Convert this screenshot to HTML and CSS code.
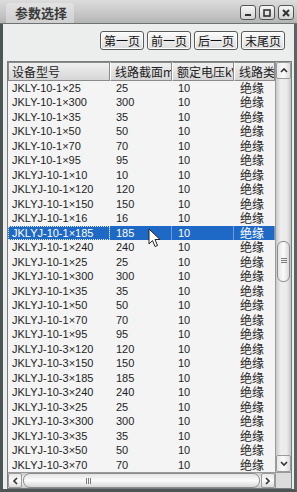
FILE: index.html
```html
<!DOCTYPE html>
<html lang="zh-CN">
<head>
    <meta charset="UTF-8">
    <title>参数选择</title>
    <link rel="stylesheet" href="styles.css">
</head>
<body>
    <div class="window">
        <div class="titlebar">
            <div class="title-tab">参数选择</div>
            <div class="win-btns">
                <span class="win-btn"><svg width="10" height="10" viewBox="0 0 10 10"><rect x="2" y="6" width="6" height="2" fill="#333"/></svg></span>
                <span class="win-btn"><svg width="10" height="10" viewBox="0 0 10 10"><rect x="2" y="2" width="6" height="6" fill="none" stroke="#333" stroke-width="1.6"/></svg></span>
                <span class="win-btn"><svg width="10" height="10" viewBox="0 0 10 10"><path d="M2 2 L8 8 M8 2 L2 8" stroke="#333" stroke-width="2"/></svg></span>
            </div>
        </div>

        <div class="toolbar">
            <button class="page-btn">第一页</button>
            <button class="page-btn">前一页</button>
            <button class="page-btn">后一页</button>
            <button class="page-btn">末尾页</button>
        </div>

        <div class="grid">
            <div class="grid-main">
                <div class="grid-view">
                    <div class="row head">
                        <div class="cell">设备型号</div>
                        <div class="cell">线路截面mm²</div>
                        <div class="cell">额定电压kV</div>
                        <div class="cell">线路类型</div>
                    </div>
                    <div class="row"><div class="cell">JKLY-10-1×25</div><div class="cell">25</div><div class="cell">10</div><div class="cell cn">绝缘</div></div>
                    <div class="row"><div class="cell">JKLY-10-1×300</div><div class="cell">300</div><div class="cell">10</div><div class="cell cn">绝缘</div></div>
                    <div class="row"><div class="cell">JKLY-10-1×35</div><div class="cell">35</div><div class="cell">10</div><div class="cell cn">绝缘</div></div>
                    <div class="row"><div class="cell">JKLY-10-1×50</div><div class="cell">50</div><div class="cell">10</div><div class="cell cn">绝缘</div></div>
                    <div class="row"><div class="cell">JKLY-10-1×70</div><div class="cell">70</div><div class="cell">10</div><div class="cell cn">绝缘</div></div>
                    <div class="row"><div class="cell">JKLY-10-1×95</div><div class="cell">95</div><div class="cell">10</div><div class="cell cn">绝缘</div></div>
                    <div class="row"><div class="cell">JKLYJ-10-1×10</div><div class="cell">10</div><div class="cell">10</div><div class="cell cn">绝缘</div></div>
                    <div class="row"><div class="cell">JKLYJ-10-1×120</div><div class="cell">120</div><div class="cell">10</div><div class="cell cn">绝缘</div></div>
                    <div class="row"><div class="cell">JKLYJ-10-1×150</div><div class="cell">150</div><div class="cell">10</div><div class="cell cn">绝缘</div></div>
                    <div class="row"><div class="cell">JKLYJ-10-1×16</div><div class="cell">16</div><div class="cell">10</div><div class="cell cn">绝缘</div></div>
                    <div class="row selected"><div class="cell">JKLYJ-10-1×185</div><div class="cell">185</div><div class="cell">10</div><div class="cell cn">绝缘</div></div>
                    <div class="row"><div class="cell">JKLYJ-10-1×240</div><div class="cell">240</div><div class="cell">10</div><div class="cell cn">绝缘</div></div>
                    <div class="row"><div class="cell">JKLYJ-10-1×25</div><div class="cell">25</div><div class="cell">10</div><div class="cell cn">绝缘</div></div>
                    <div class="row"><div class="cell">JKLYJ-10-1×300</div><div class="cell">300</div><div class="cell">10</div><div class="cell cn">绝缘</div></div>
                    <div class="row"><div class="cell">JKLYJ-10-1×35</div><div class="cell">35</div><div class="cell">10</div><div class="cell cn">绝缘</div></div>
                    <div class="row"><div class="cell">JKLYJ-10-1×50</div><div class="cell">50</div><div class="cell">10</div><div class="cell cn">绝缘</div></div>
                    <div class="row"><div class="cell">JKLYJ-10-1×70</div><div class="cell">70</div><div class="cell">10</div><div class="cell cn">绝缘</div></div>
                    <div class="row"><div class="cell">JKLYJ-10-1×95</div><div class="cell">95</div><div class="cell">10</div><div class="cell cn">绝缘</div></div>
                    <div class="row"><div class="cell">JKLYJ-10-3×120</div><div class="cell">120</div><div class="cell">10</div><div class="cell cn">绝缘</div></div>
                    <div class="row"><div class="cell">JKLYJ-10-3×150</div><div class="cell">150</div><div class="cell">10</div><div class="cell cn">绝缘</div></div>
                    <div class="row"><div class="cell">JKLYJ-10-3×185</div><div class="cell">185</div><div class="cell">10</div><div class="cell cn">绝缘</div></div>
                    <div class="row"><div class="cell">JKLYJ-10-3×240</div><div class="cell">240</div><div class="cell">10</div><div class="cell cn">绝缘</div></div>
                    <div class="row"><div class="cell">JKLYJ-10-3×25</div><div class="cell">25</div><div class="cell">10</div><div class="cell cn">绝缘</div></div>
                    <div class="row"><div class="cell">JKLYJ-10-3×300</div><div class="cell">300</div><div class="cell">10</div><div class="cell cn">绝缘</div></div>
                    <div class="row"><div class="cell">JKLYJ-10-3×35</div><div class="cell">35</div><div class="cell">10</div><div class="cell cn">绝缘</div></div>
                    <div class="row"><div class="cell">JKLYJ-10-3×50</div><div class="cell">50</div><div class="cell">10</div><div class="cell cn">绝缘</div></div>
                    <div class="row"><div class="cell">JKLYJ-10-3×70</div><div class="cell">70</div><div class="cell">10</div><div class="cell cn">绝缘</div></div>
                </div>

                <div class="vscroll">
                    <div class="sb-arrow"><svg width="8" height="6" viewBox="0 0 8 6"><path d="M1 5 L4 2 L7 5" fill="none" stroke="#333" stroke-width="1.6"/></svg></div>
                    <div class="v-track">
                        <div class="v-thumb"><span class="grip-h"></span></div>
                    </div>
                    <div class="sb-arrow"><svg width="8" height="6" viewBox="0 0 8 6"><path d="M1 1 L4 4 L7 1" fill="none" stroke="#333" stroke-width="1.6"/></svg></div>
                </div>
            </div>

            <div class="hscroll-row">
                <div class="hscroll">
                    <div class="sb-arrow h"><svg width="6" height="8" viewBox="0 0 6 8"><path d="M5 1 L2 4 L5 7" fill="none" stroke="#333" stroke-width="1.6"/></svg></div>
                    <div class="h-thumb"><span class="grip-v"></span></div>
                    <div class="sb-arrow h"><svg width="6" height="8" viewBox="0 0 6 8"><path d="M1 1 L4 4 L1 7" fill="none" stroke="#333" stroke-width="1.6"/></svg></div>
                </div>
                <div class="corner"></div>
            </div>

            <!-- mouse pointer over the selected row -->
            <svg class="cursor" width="13" height="20" viewBox="0 0 13 20">
                <path d="M1 1 L1 16 L4.5 12.5 L7 18.5 L9.5 17.5 L7 11.5 L12 11.5 Z" fill="#fff" stroke="#222" stroke-width="1"/>
            </svg>
        </div>
    </div>
</body>
</html>
```

FILE: styles.css
```css
* {
    box-sizing: border-box;
}

body {
    margin: 0;
    width: 297px;
    height: 492px;
    overflow: hidden;
    font-family: "Liberation Sans", "Noto Sans CJK SC", sans-serif;
    background: #ececec;
}

.window {
    width: 297px;
    height: 492px;
    display: flex;
    flex-direction: column;
    background: #eceeee;
    border-left: 3px solid #4b5555;
    border-right: 3px solid #5d6262;
    border-bottom: 3px solid #4e5454;
}

/* title bar */
.titlebar {
    height: 24px;
    display: flex;
    align-items: flex-start;
    justify-content: space-between;
    margin: 0 -3px;
    padding: 3px 3px 0 6px;
    background: linear-gradient(#dcdcdc, #c2c2c2 70%, #b4b4b4);
    border-bottom: 1px solid #6e7272;
}

.title-tab {
    height: 20px;
    padding: 1px 7px 0 9px;
    font-family: "Noto Sans CJK SC", sans-serif;
    font-size: 13px;
    font-weight: bold;
    line-height: 18px;
    color: #3a3a3a;
    background: linear-gradient(#e2e2e2, #cfcfcf);
    border-radius: 4px 4px 0 0;
}

.win-btns {
    display: flex;
    gap: 3px;
    margin-top: 2px;
}

.win-btn {
    width: 16px;
    height: 15px;
    display: flex;
    align-items: center;
    justify-content: center;
    border: 1px solid #555;
    border-radius: 3px;
    background: linear-gradient(#f6f6f6, #d2d2d2);
}

/* page buttons */
.toolbar {
    height: 37px;
    display: flex;
    justify-content: flex-end;
    gap: 3px;
    padding: 7px 9px 0 0;
}

.page-btn {
    width: 44px;
    height: 19px;
    padding: 0;
    font-family: "Noto Sans CJK SC", sans-serif;
    font-size: 12px;
    line-height: 16px;
    color: #111;
    border: 1px solid #5a5a5a;
    border-radius: 3px;
    background: linear-gradient(#fbfbfb, #dddddd);
    box-shadow: inset 0 0 0 1px #fff;
}

/* data grid */
.grid {
    position: relative;
    flex: 1;
    display: flex;
    flex-direction: column;
    margin: 0 2px 0 4px;
    border: 1px solid #7a7d7d;
    background: #f4f4f4;
}

.grid-main {
    flex: 1;
    display: flex;
    min-height: 0;
}

.grid-view {
    flex: 1;
    min-width: 0;
    overflow: hidden;
}

.row {
    display: grid;
    grid-template-columns: 102px 62px 62px minmax(0, 1fr);
    height: 14.5px;
    font-size: 11px;
    line-height: 14.5px;
    color: #1e1e1e;
}

.cell {
    padding-left: 4px;
    white-space: nowrap;
    overflow: hidden;
}

.row .cell:nth-child(n+2) {
    padding-left: 6px;
}

.cn {
    font-family: "Noto Sans CJK SC", sans-serif;
    font-size: 12px;
}

.row.head {
    height: 19px;
    line-height: 17px;
    font-family: "Noto Sans CJK SC", sans-serif;
    font-size: 12px;
    color: #222;
}

.row.head .cell {
    background: linear-gradient(#f0f0f0, #d6d6d6);
    border: 1px solid #8a8a8a;
    border-left-color: #fff;
    padding-left: 3px;
}

.row.head .cell:first-child {
    border-left-color: #8a8a8a;
}

.row.head .cell:nth-child(n+2) {
    padding-left: 4px;
}

.row.selected {
    background: #1f69c6;
    color: #fff;
}

.row.selected .cell {
    border-right: 1px solid #6f9ad8;
}

.row.selected .cell:first-child {
    outline: 1px dotted #dbe6f6;
    outline-offset: -1px;
}

/* scrollbars */
.vscroll {
    width: 16px;
    flex: none;
    display: flex;
    flex-direction: column;
    background: linear-gradient(90deg, #c9c9c9, #ececec 30%, #ececec 70%, #c6c6c6);
    border-left: 1px solid #9a9a9a;
}

.sb-arrow {
    height: 17px;
    display: flex;
    align-items: center;
    justify-content: center;
    background: linear-gradient(90deg, #e8e8e8, #fafafa 50%, #dcdcdc);
    border: 1px solid #9b9b9b;
    border-radius: 2px;
}

.v-track {
    flex: 1;
    padding-top: 162px;
}

.v-thumb {
    height: 41px;
    margin: 0 1px;
    display: flex;
    align-items: center;
    justify-content: center;
    border: 1px solid #8c8c8c;
    border-radius: 6px;
    background: linear-gradient(90deg, #e4e4e4, #fbfbfb 50%, #d8d8d8);
}

.grip-h {
    width: 6px;
    height: 6px;
    background: repeating-linear-gradient(#7a7a7a 0 1px, transparent 1px 2px);
}

.hscroll-row {
    height: 16px;
    display: flex;
    border-top: 1px solid #9a9a9a;
}

.hscroll {
    flex: 1;
    display: flex;
    background: linear-gradient(#c9c9c9, #ececec 30%, #ececec 70%, #c6c6c6);
}

.sb-arrow.h {
    width: 14px;
    height: auto;
    background: linear-gradient(#e8e8e8, #fafafa 50%, #dcdcdc);
}

.h-thumb {
    flex: 1;
    margin: 0 1px;
    display: flex;
    align-items: center;
    padding-left: 62px;
    border: 1px solid #8c8c8c;
    border-radius: 7px;
    background: linear-gradient(#e4e4e4, #fbfbfb 50%, #d8d8d8);
}

.grip-v {
    width: 6px;
    height: 6px;
    background: repeating-linear-gradient(90deg, #7a7a7a 0 1px, transparent 1px 2px);
}

.corner {
    width: 16px;
    background: #dcdcdc;
    border-left: 1px solid #9a9a9a;
}

.cursor {
    position: absolute;
    left: 140px;
    top: 166px;
}
```
